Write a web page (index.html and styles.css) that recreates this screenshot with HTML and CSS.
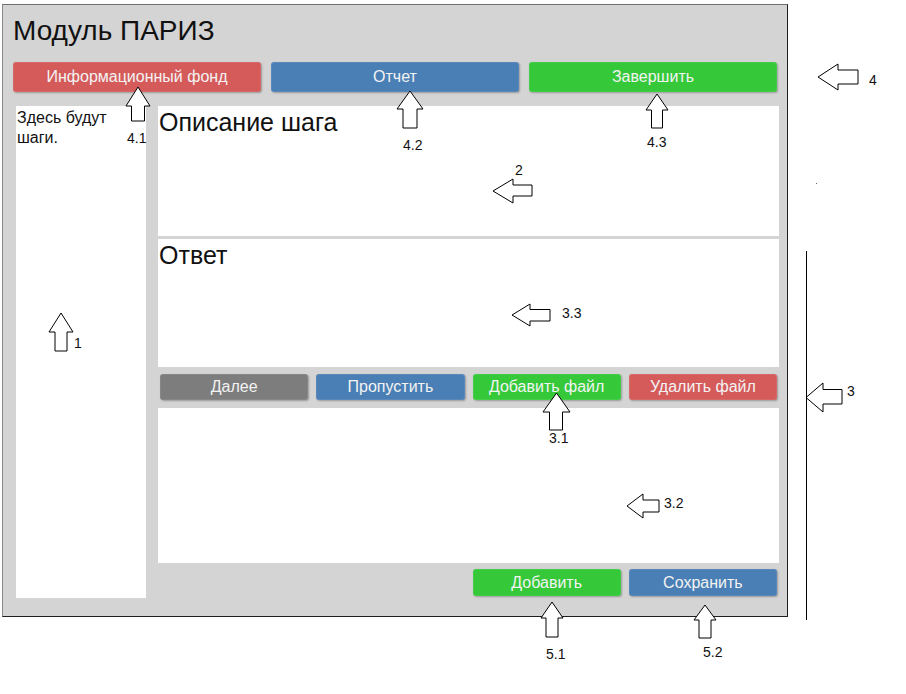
FILE: index.html
```html
<!DOCTYPE html>
<html lang="ru">
<head>
<meta charset="utf-8">
<title>Модуль ПАРИЗ</title>
<link rel="stylesheet" href="styles.css">
</head>
<body>
<div class="page">
  <div class="panel">
    <h1 class="title">Модуль ПАРИЗ</h1>
    <div class="top-actions">
      <button class="btn btn-red btn-tall">Информационный фонд</button>
      <button class="btn btn-blue btn-tall">Отчет</button>
      <button class="btn btn-green btn-tall">Завершить</button>
    </div>
    <div class="main">
      <aside class="steps">Здесь будут шаги.</aside>
      <section class="work">
        <div class="box box-desc"><h2 class="box-title">Описание шага</h2></div>
        <div class="box box-answer"><h2 class="box-title">Ответ</h2></div>
        <div class="btn-grid">
          <button class="btn btn-gray">Далее</button>
          <button class="btn btn-blue">Пропустить</button>
          <button class="btn btn-green">Добавить файл</button>
          <button class="btn btn-red">Удалить файл</button>
        </div>
        <div class="box box-files"></div>
        <div class="btn-grid btn-grid-bottom">
          <button class="btn btn-green col3">Добавить</button>
          <button class="btn btn-blue">Сохранить</button>
        </div>
      </section>
    </div>
  </div>

  <svg class="notes" width="906" height="694" viewBox="0 0 906 694">
    <g class="arrow">
      <!-- up arrows -->
      <polygon points="138,87 150,106 144.5,106 144.5,121 131.5,121 131.5,106 126,106"/>
      <polygon points="410,91 423,109 417,109 417,128 403,128 403,109 397,109"/>
      <polygon points="657,94 668,110 662.5,110 662.5,128 651.5,128 651.5,110 646,110"/>
      <polygon points="61,313 73,332 67,332 67,351 55,351 55,332 49,332"/>
      <polygon points="556.5,393 570,412 562.5,412 562.5,430 549.5,430 549.5,412 543,412"/>
      <polygon points="552,602 563,618 558,618 558,637 546,637 546,618 541,618"/>
      <polygon points="705,605 716,620 711,620 711,638 699,638 699,620 694,620"/>
      <!-- left arrows -->
      <polygon points="818,77 838,64 838,70 858,70 858,84 838,84 838,90"/>
      <polygon points="493,191 513,179 513,185 532,185 532,196 513,196 513,203"/>
      <polygon points="512,315 530,304 530,309.5 550,309.5 550,321 530,321 530,326"/>
      <polygon points="806,397.5 823,383 823,389.5 842,389.5 842,404 823,404 823,412"/>
      <polygon points="627,506 643,494 643,500 659,500 659,512 643,512 643,518"/>
    </g>
    <line class="bracket" x1="806.5" y1="251" x2="806.5" y2="620"/>
    <rect class="dot" x="816" y="183" width="1" height="1"/>
    <g class="labels">
      <text x="127" y="143">4.1</text>
      <text x="403" y="150">4.2</text>
      <text x="647" y="147">4.3</text>
      <text x="869" y="85">4</text>
      <text x="515" y="175">2</text>
      <text x="562" y="318">3.3</text>
      <text x="74" y="348">1</text>
      <text x="847" y="396">3</text>
      <text x="549" y="443">3.1</text>
      <text x="664" y="508">3.2</text>
      <text x="546" y="659">5.1</text>
      <text x="703" y="657">5.2</text>
    </g>
  </svg>
</div>
</body>
</html>
```

FILE: styles.css
```css
* { box-sizing: border-box; }

html, body {
  margin: 0;
  padding: 0;
  background: #ffffff;
}

.page {
  position: relative;
  width: 906px;
  height: 694px;
  padding: 4px 0 0 2px;
  font-family: "Liberation Sans", Arial, sans-serif;
}

.panel {
  width: 786px;
  height: 613px;
  background: #d4d4d4;
  border: 1px solid #1e1e1e;
  border-top-color: #6e6e6e;
  border-left-color: #8a8a8a;
  display: flex;
  flex-direction: column;
}

.title {
  margin: 0 0 15px 0;
  padding: 10px 0 0 10px;
  font-weight: normal;
  font-size: 28px;
  line-height: 32px;
  height: 42px;
  color: #111;
}

.top-actions {
  display: grid;
  grid-template-columns: repeat(3, 1fr);
  column-gap: 10px;
  padding: 0 10px;
}

.btn {
  border: none;
  margin: 0;
  padding: 0;
  border-radius: 3px;
  font-family: "Liberation Sans", Arial, sans-serif;
  font-size: 16px;
  color: #f3f3f3;
  height: 26px;
  line-height: 26px;
  box-shadow: 1px 1px 2px rgba(0, 0, 0, 0.28), inset 0 0 0 1px rgba(255, 255, 255, 0.08);
  white-space: nowrap;
}

.btn-tall {
  height: 30px;
  line-height: 30px;
}

.btn-red { background: #d55b5b; }
.btn-blue { background: #4a7fb5; }
.btn-green { background: #35c93a; }
.btn-gray { background: #7d7d7d; }

.main {
  display: flex;
  gap: 12px;
  padding: 0 8px 0 13px;
  margin-top: 14px;
}

.steps {
  width: 130px;
  height: 492px;
  flex: none;
  background: #ffffff;
  padding: 2px 4px 0 1px;
  font-size: 16px;
  line-height: 20px;
  color: #111;
}

.work {
  width: 621px;
  flex: none;
  display: flex;
  flex-direction: column;
}

.box {
  background: #ffffff;
}

.box-desc { height: 130px; }
.box-answer { height: 128px; margin-top: 3px; }
.box-files { height: 155px; margin-top: 8px; }

.box-title {
  margin: 0;
  padding: 2px 0 0 1px;
  font-weight: normal;
  font-size: 25px;
  line-height: 28px;
  color: #111;
}

.btn-grid {
  display: grid;
  grid-template-columns: repeat(4, 1fr);
  column-gap: 8px;
  padding: 0 2px;
  margin-top: 7px;
}

.btn-grid-bottom {
  margin-top: 6px;
}

.btn-grid-bottom .btn {
  height: 27px;
  line-height: 27px;
}

.col3 { grid-column: 3; }

.notes {
  position: absolute;
  left: 0;
  top: 0;
  pointer-events: none;
}

.arrow polygon {
  fill: #ffffff;
  stroke: #000000;
  stroke-width: 1;
}

.bracket {
  stroke: #000;
  stroke-width: 1;
}

.dot { fill: #666; }

.labels text {
  font-family: "Liberation Sans", Arial, sans-serif;
  font-size: 14px;
  fill: #111;
}
```
